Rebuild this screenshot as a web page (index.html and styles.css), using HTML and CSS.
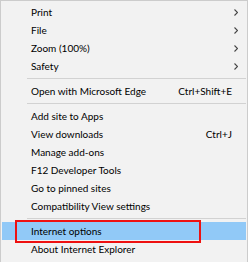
FILE: index.html
```html
<!DOCTYPE html>
<html lang="en">
<head>
    <meta charset="UTF-8">
    <title>Tools menu</title>
    <link rel="stylesheet" href="styles.css">
</head>
<body>
    <!-- context menu -->
    <div class="menu">
        <div class="item sub"><span class="label">Print</span><svg class="arrow" viewBox="0 0 4 7"><path d="M0.5 0.5 L3.5 3.5 L0.5 6.5"/></svg></div>
        <div class="item sub"><span class="label">File</span><svg class="arrow" viewBox="0 0 4 7"><path d="M0.5 0.5 L3.5 3.5 L0.5 6.5"/></svg></div>
        <div class="item sub"><span class="label">Zoom (100%)</span><svg class="arrow" viewBox="0 0 4 7"><path d="M0.5 0.5 L3.5 3.5 L0.5 6.5"/></svg></div>
        <div class="item sub"><span class="label">Safety</span><svg class="arrow" viewBox="0 0 4 7"><path d="M0.5 0.5 L3.5 3.5 L0.5 6.5"/></svg></div>
        <div class="sep"></div>
        <div class="item"><span class="label">Open with Microsoft Edge</span><span class="key">Ctrl+Shift+E</span></div>
        <div class="sep"></div>
        <div class="item"><span class="label">Add site to Apps</span></div>
        <div class="item"><span class="label">View downloads</span><span class="key">Ctrl+J</span></div>
        <div class="item"><span class="label">Manage add-ons</span></div>
        <div class="item"><span class="label">F12 Developer Tools</span></div>
        <div class="item"><span class="label">Go to pinned sites</span></div>
        <div class="item"><span class="label">Compatibility View settings</span></div>
        <div class="sep"></div>
        <div class="item active"><span class="label">Internet options</span><span class="callout"></span></div>
        <div class="item"><span class="label">About Internet Explorer</span></div>
    </div>
</body>
</html>
```

FILE: styles.css
```css
body {
    margin: 0;
    background: #ffffff;
    font-family: 'Lato', 'Noto Sans', sans-serif;
}

/* menu frame */
.menu {
    width: 248px;
    height: 262px;
    box-sizing: border-box;
    background: #f2f2f2;
    border: 1px solid #cccccc;
    border-bottom: none;
    padding: 2px 1px 0 1px;
    font-size: 10px;
    color: #000;
}

.item {
    position: relative;
    display: flex;
    align-items: center;
    height: 18px;
    padding: 0 14px 0 29px;
}

.item .label {
    flex: 1;
    white-space: nowrap;
}

.item .key {
    white-space: nowrap;
}

.arrow {
    width: 4px;
    height: 7px;
    fill: none;
    stroke: #444;
    stroke-width: 1.1;
}

.sub {
    padding-right: 8px;
}

.sep {
    height: 7px;
    display: flex;
    align-items: center;
    padding-left: 25px;
}

.sep::after {
    content: "";
    flex: 1;
    height: 1px;
    background: #d2d2d2;
}

.active {
    background: #91c9f7;
}

/* red annotation box */
.callout {
    position: absolute;
    left: 13px;
    top: -2px;
    width: 186px;
    height: 23px;
    box-sizing: border-box;
    border: 2px solid #ee1111;
}
```
